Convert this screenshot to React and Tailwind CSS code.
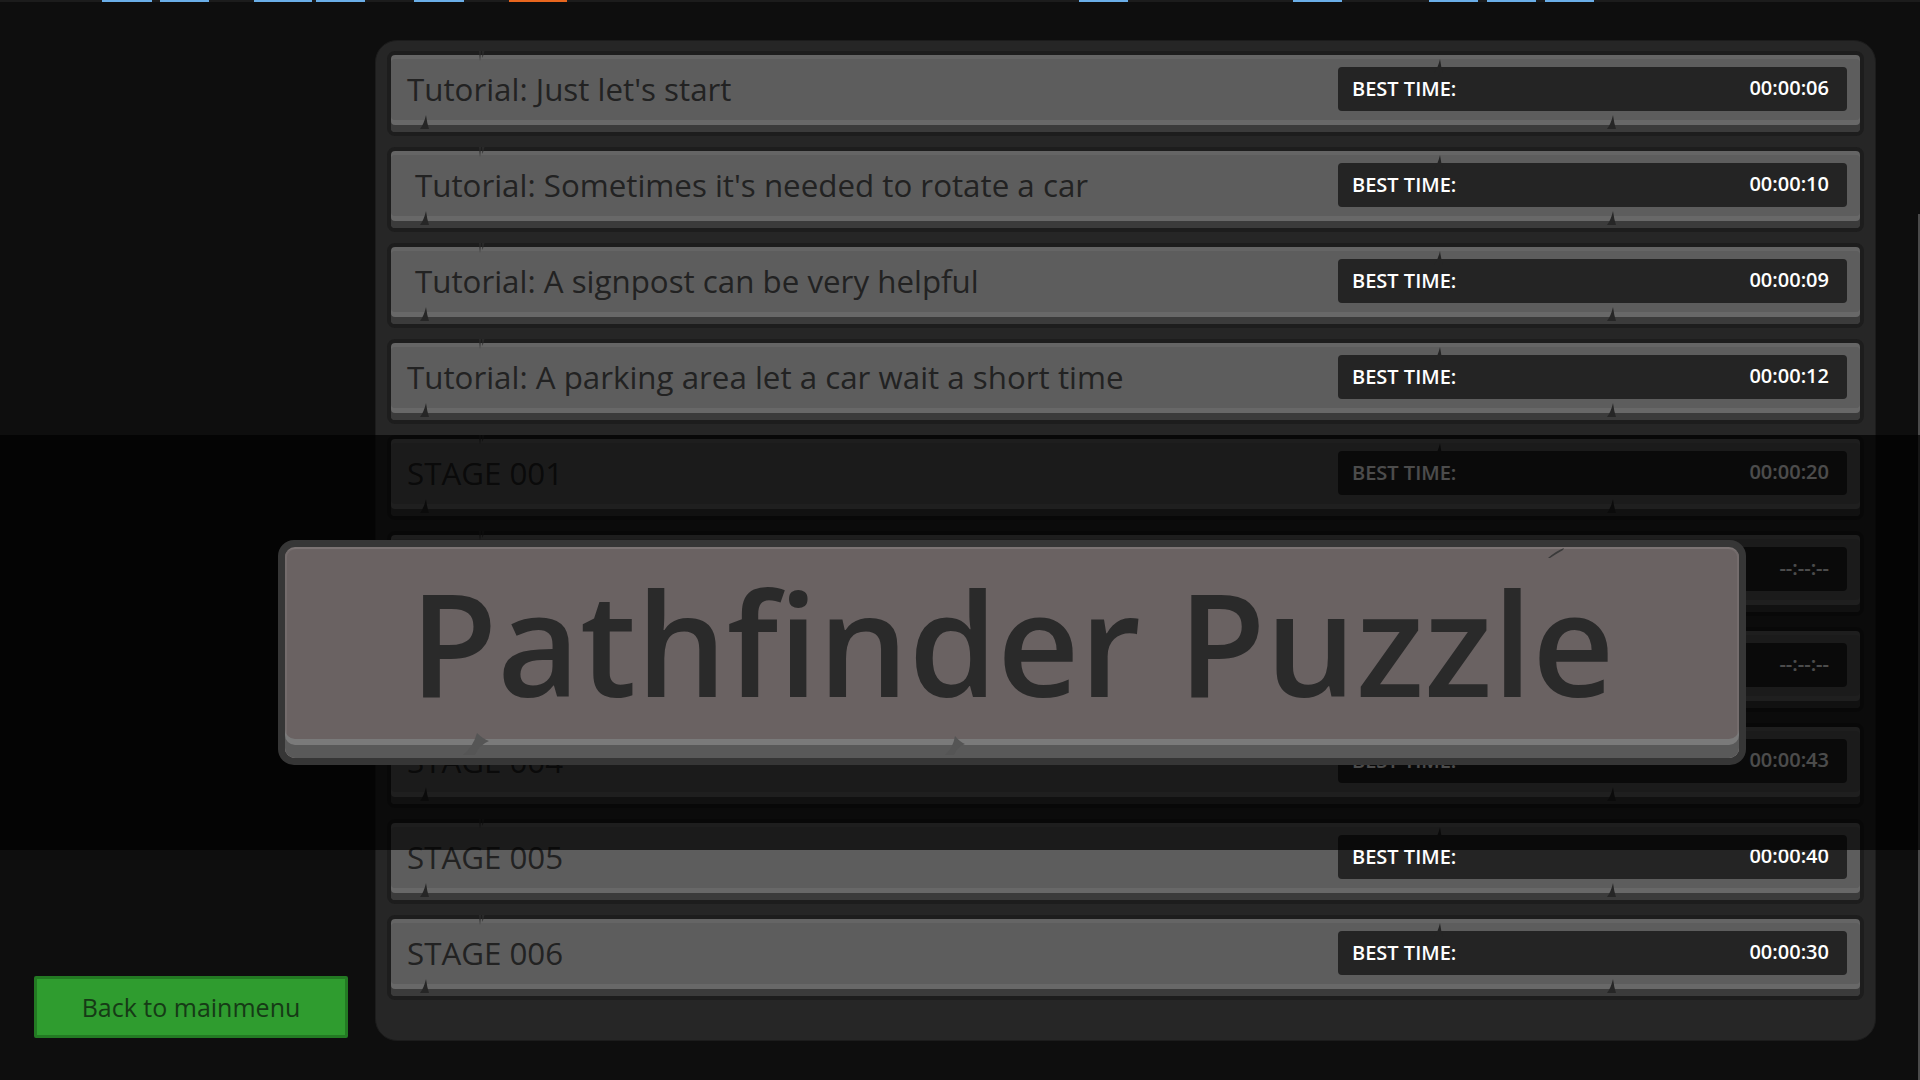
import React from 'react';

const levels = [
    { name: "Tutorial: Just let's start", time: '00:00:06' },
    { name: "Tutorial: Sometimes it's needed to rotate a car", time: '00:00:10', indent: true },
    { name: 'Tutorial: A signpost can be very helpful', time: '00:00:09', indent: true },
    { name: 'Tutorial: A parking area let a car wait a short time', time: '00:00:12' },
    { name: 'STAGE 001', time: '00:00:20' },
    { name: 'STAGE 002', time: '--:--:--' },
    { name: 'STAGE 003', time: '--:--:--' },
    { name: 'STAGE 004', time: '00:00:43' },
    { name: 'STAGE 005', time: '00:00:40' },
    { name: 'STAGE 006', time: '00:00:30' },
];

// little thorn shapes the game skin puts on its frames
const SpikeUp = ({ className, color = '#262626' }) => (
    <svg className={className} width="9" height="14" viewBox="0 0 9 14">
        <path d="M0 14 Q4 9 6 0 Q7 8 9 14 Z" fill={color} />
    </svg>
);

const SpikeDown = ({ className }) => (
    <svg className={className} width="8" height="11" viewBox="0 0 8 11">
        <path d="M1 0 L3 0 L2 10 Z M4 0 L6.5 0 L4.5 7 Z" fill="#2a2a2a" />
    </svg>
);

const Row = ({ name, time, indent }) => (
    <div className="relative flex h-[85px] shrink-0 rounded-[8px] border-[4px] border-[#1d1d1d] bg-[#5d5d5d] shadow-[inset_0_-7px_0_#3b3b3b,inset_0_-12px_0_#686868,inset_0_4px_0_#656565]">
        <SpikeDown className="absolute left-[87px] -top-[4px]" />
        <SpikeUp className="absolute left-[29px] bottom-[3px]" />
        <SpikeUp className="absolute left-[1216px] bottom-[3px]" />
        <div className={indent ? 'flex flex-1 items-center pb-[8px] pl-[24px]' : 'flex flex-1 items-center pb-[8px] pl-[16px]'}>
            <span className="text-[31.3px] font-medium leading-none text-[#222222]">{name}</span>
        </div>
        <div className="relative mt-[12px] mr-[13px] flex h-[44px] w-[509px] items-center justify-between rounded-[4px] bg-[#242424] pl-[14px] pr-[18px] text-[20px] font-semibold leading-none text-white">
            <SpikeUp className="absolute left-[96px] -top-[8px]" color="#242424" />
            <span>BEST TIME:</span>
            <span className="-mt-[2px]">{time}</span>
        </div>
    </div>
);

const topBars = [
    { left: 'left-[102px] w-[50px]', color: 'bg-[#6aaee8]' },
    { left: 'left-[160px] w-[49px]', color: 'bg-[#6aaee8]' },
    { left: 'left-[254px] w-[58px]', color: 'bg-[#6aaee8]' },
    { left: 'left-[316px] w-[49px]', color: 'bg-[#6aaee8]' },
    { left: 'left-[414px] w-[50px]', color: 'bg-[#6aaee8]' },
    { left: 'left-[509px] w-[58px]', color: 'bg-[#e8661e]' },
    { left: 'left-[1079px] w-[49px]', color: 'bg-[#6aaee8]' },
    { left: 'left-[1293px] w-[49px]', color: 'bg-[#6aaee8]' },
    { left: 'left-[1429px] w-[49px]', color: 'bg-[#6aaee8]' },
    { left: 'left-[1487px] w-[49px]', color: 'bg-[#6aaee8]' },
    { left: 'left-[1545px] w-[49px]', color: 'bg-[#6aaee8]' },
];

const App = () => {
    return (
        <div className="relative flex h-[1080px] w-[1920px] flex-col overflow-hidden bg-[#0e0e0e] font-['Open_Sans','Noto_Sans',sans-serif]">
            <div className="relative h-[2px] shrink-0 bg-[#1c1c1c]">
                {topBars.map((b, i) => (
                    <span key={i} className={`absolute top-0 h-[2px] ${b.left} ${b.color}`} />
                ))}
            </div>

            <div className="flex flex-1">
                <div className="flex w-[375px] shrink-0 flex-col justify-end pb-[42px] pl-[34px]">
                    <button className="flex h-[62px] w-[314px] items-center justify-center rounded-[2px] border-[3px] border-[#237a23] bg-[#2f9c2f] text-[25px] leading-none text-[#163a16]">
                        Back to mainmenu
                    </button>
                </div>

                <div className="mt-[38px] flex h-[1001px] w-[1501px] flex-col gap-[11px] rounded-[22px] border border-[#1c1c1c] bg-[#262626] px-[11px] pt-[10px]">
                    {levels.map((l) => (
                        <Row key={l.name} {...l} />
                    ))}
                </div>
            </div>

            <div className="absolute right-0 top-[214px] bottom-0 w-[2px] bg-[#4a4a4a]" />

            {/* dimmed band behind the title */}
            <div className="absolute left-0 top-[435px] z-10 h-[415px] w-full bg-black/70" />

            <div className="absolute left-[278px] top-[540px] z-20 h-[225px] w-[1468px] rounded-[16px] bg-[#363636] p-[7px]">
                <div className="flex h-full w-full items-center justify-center rounded-[10px] border-t-2 border-[#7c7474] bg-[#6a6262] pb-[22px] shadow-[inset_0_-13px_0_#595959,inset_0_-19px_0_#7a7a7a,inset_2px_0_0_#746c6c,inset_-2px_0_0_#746c6c]">
                    <span className="text-[142.5px] font-semibold leading-none text-[#2a2a2a]">Pathfinder Puzzle</span>
                </div>
                <svg className="absolute left-[185px] top-[193px]" width="26" height="22" viewBox="0 0 26 22">
                    <path d="M0 22 Q10 14 14 0 Q20 6 26 8 Q16 12 12 22 Z" fill="#555555" />
                </svg>
                <svg className="absolute left-[667px] top-[196px]" width="20" height="19" viewBox="0 0 20 19">
                    <path d="M0 19 Q8 12 10 0 Q15 6 20 8 Q12 11 9 19 Z" fill="#555555" />
                </svg>
                <svg className="absolute left-[1270px] top-[8px]" width="16" height="10" viewBox="0 0 16 10">
                    <path d="M0 10 Q8 3 16 0 L15 2 Q8 6 2 10 Z" fill="#3a3a3a" />
                </svg>
            </div>
        </div>
    );
};

export default App;
